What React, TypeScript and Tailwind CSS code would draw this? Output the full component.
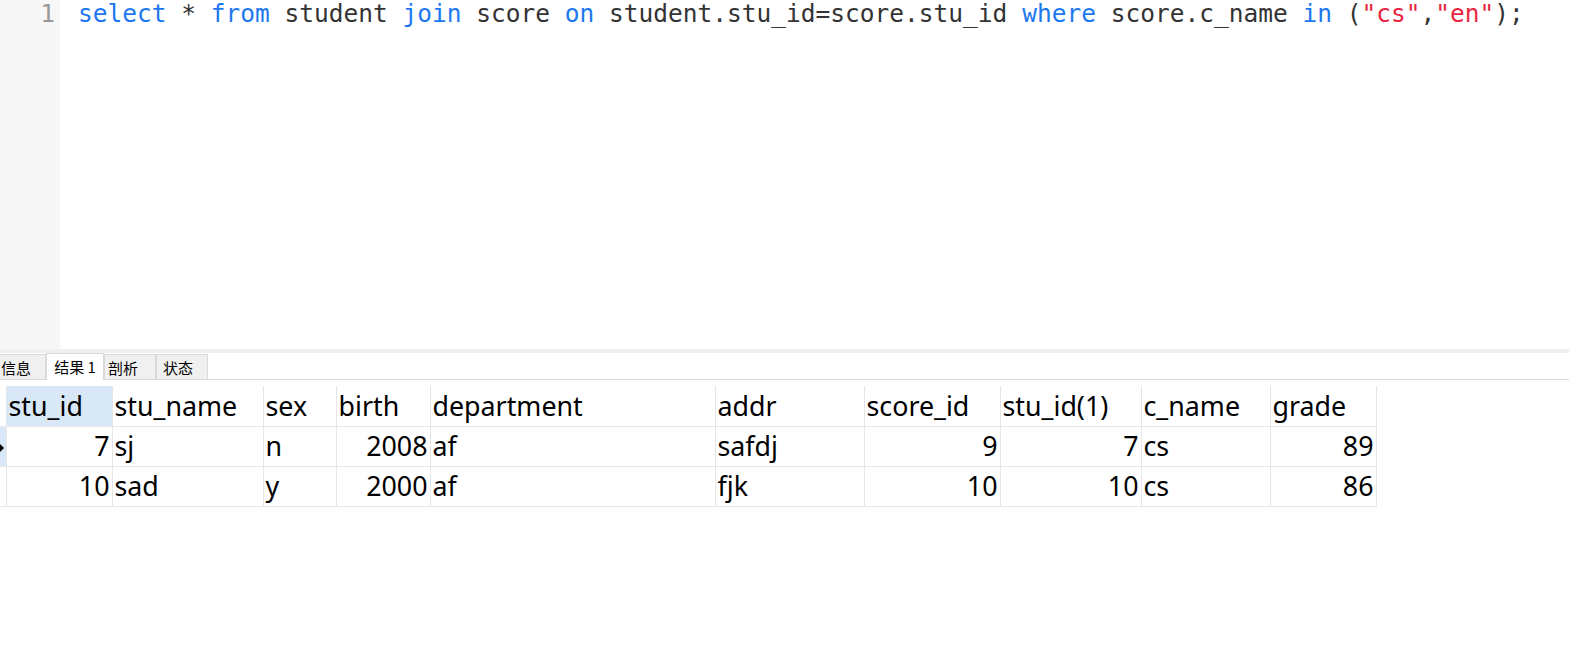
import React from 'react';

const kw = 'text-[#1c78f0]';
const str = 'text-[#e8263f]';

const columns = [
    { name: 'stu_id', w: 'w-[106px]', right: true },
    { name: 'stu_name', w: 'w-[151px]' },
    { name: 'sex', w: 'w-[73px]' },
    { name: 'birth', w: 'w-[94px]', right: true },
    { name: 'department', w: 'w-[285px]' },
    { name: 'addr', w: 'w-[149px]' },
    { name: 'score_id', w: 'w-[136px]', right: true },
    { name: 'stu_id(1)', w: 'w-[141px]', right: true },
    { name: 'c_name', w: 'w-[129px]' },
    { name: 'grade', w: 'w-[106px]', right: true },
];

const rows = [
    ['7', 'sj', 'n', '2008', 'af', 'safdj', '9', '7', 'cs', '89'],
    ['10', 'sad', 'y', '2000', 'af', 'fjk', '10', '10', 'cs', '86'],
];

function Editor() {
    return (
        <div className="flex h-[349px]">
            <div className="w-[60px] bg-[#f7f7f7] text-right pr-[5px] text-[#999999] text-[24.5px] leading-[28px] font-['DejaVu_Sans_Mono',monospace]">1</div>
            <pre className="pl-[18px] text-[24.5px] leading-[28px] text-[#333333] font-['DejaVu_Sans_Mono',monospace]">
                <span className={kw}>select</span> * <span className={kw}>from</span> student <span className={kw}>join</span> score <span className={kw}>on</span> student.stu_id=score.stu_id <span className={kw}>where</span> score.c_name <span className={kw}>in</span> (<span className={str}>"cs"</span>,<span className={str}>"en"</span>);
            </pre>
        </div>
    );
}

function Tabs() {
    const tab = "h-[25px] px-[1px] pt-[2px] flex items-center bg-[#f0f0f0] border border-[#d9d9d9] border-b-0 text-[15px] text-black";
    return (
        <div className="flex items-end h-[27px] border-b border-[#d9d9d9] font-['Noto_Sans_CJK_SC',sans-serif]">
            <div className={`${tab} w-[46px] border-l-0`}>信息</div>
            <div className="h-[27px] w-[58px] flex items-center justify-center bg-white border border-[#d9d9d9] border-b-0 -mb-px text-[15px] text-black">结果 1</div>
            <div className={`${tab} w-[52px] pl-[3px]`}>剖析</div>
            <div className={`${tab} w-[52px] pl-[6px]`}>状态</div>
        </div>
    );
}

function Grid() {
    return (
        <div className="pt-[6px] font-['Noto_Sans','Open_Sans',sans-serif] text-[26.8px] text-black">
            <table className="border-collapse table-fixed">
                <thead>
                    <tr className="h-[40px]">
                        <th className="w-[6px] p-0 border-r border-b border-[#e6e6e6]"></th>
                        {columns.map((c, i) => (
                            <th key={c.name} className={`${c.w} px-[2px] p-0 leading-[38px] text-left font-normal border-r border-b border-[#e6e6e6] ${i === 0 ? 'bg-[#d9e8f7]' : ''}`}>{c.name}</th>
                        ))}
                    </tr>
                </thead>
                <tbody>
                    {rows.map((r, ri) => (
                        <tr key={ri} className="h-[40px]">
                            <td className={`p-0 border-r border-b border-[#e6e6e6] relative ${ri === 0 ? 'bg-[#d9e8f7]' : ''}`}>
                                {ri === 0 && <div className="absolute left-0 top-[17px] w-0 h-0 border-y-[4px] border-y-transparent border-l-[4px] border-l-black"></div>}
                            </td>
                            {r.map((v, ci) => (
                                <td key={ci} className={`px-[2px] p-0 leading-[38px] border-r border-b border-[#e6e6e6] ${columns[ci].right ? 'text-right' : 'text-left'}`}>{v}</td>
                            ))}
                        </tr>
                    ))}
                </tbody>
            </table>
        </div>
    );
}

export default function App() {
    return (
        <div className="w-[1569px] h-[649px] bg-white overflow-hidden">
            <Editor />
            <div className="h-[4px] bg-[#f0f0f0]"></div>
            <Tabs />
            <Grid />
        </div>
    );
}
